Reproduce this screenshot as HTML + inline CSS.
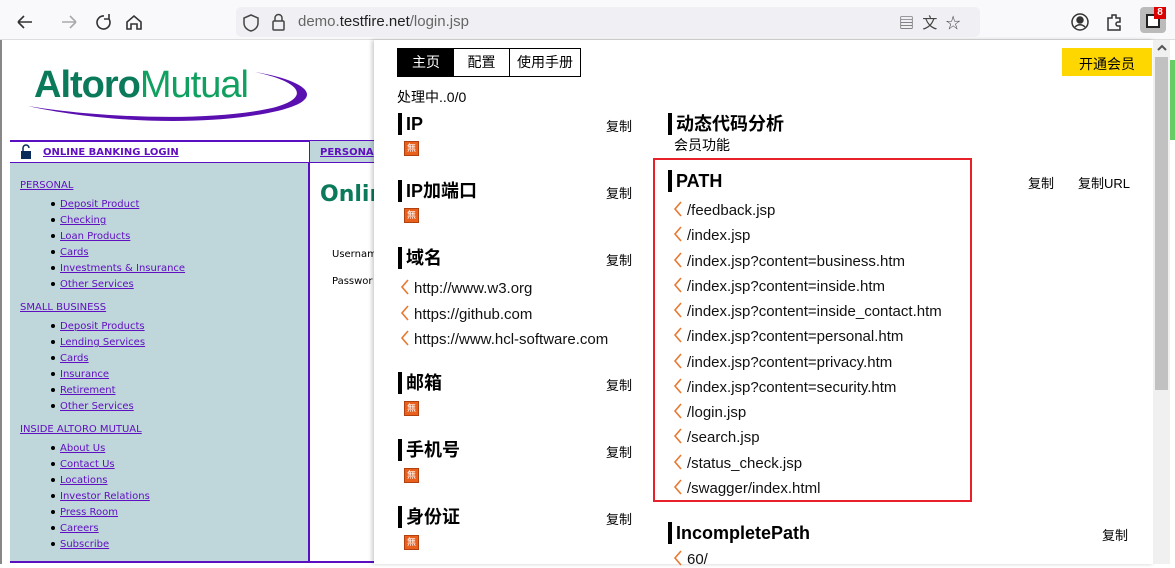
<!DOCTYPE html>
<html><head><meta charset="utf-8"><style>
*{margin:0;padding:0;box-sizing:border-box}
body{width:1175px;height:564px;overflow:hidden;background:#fff;font-family:"Liberation Sans","Noto Sans CJK SC",sans-serif;position:relative}
.a{position:absolute;white-space:nowrap}
.tb{left:0;top:0;width:1175px;height:40px;background:#f9f9fb;border-bottom:1px solid #ddd}
.url{left:236px;top:7px;width:744px;height:30px;background:#f0f0f4;border-radius:5px}
.side{left:10px;top:163px;width:300px;height:399px;background:#bfd6db;border-right:2px solid #5a10c0}
.lk{color:#6010c0;text-decoration:underline;font-family:"DejaVu Sans",sans-serif;font-size:10px}
.ul{color:#6010c0;font-family:"DejaVu Sans",sans-serif;font-size:10px;line-height:16px}
.ul u{text-decoration:underline}
.ul b{display:inline-block;width:4px;height:4px;background:#000;border-radius:50%;margin:0 5px 1px 0;vertical-align:middle}
.pop{left:374px;top:40px;width:780px;height:524px;background:#fff;box-shadow:-2px 0 4px rgba(0,0,0,.2)}
.h{font-size:18px;font-weight:bold;color:#000;border-left:4px solid #000;padding-left:4px;line-height:22px}
.cp{font-size:13px;color:#000}
.ic{width:15px;height:15px;background:#e8601c;border:1px solid #b04010;color:#fff;font-size:9px;line-height:13px;text-align:center}
.it{font-size:15px;color:#111}
.ch{display:inline-block;width:10px;height:16px;margin-right:4px;vertical-align:-2px}
</style></head><body>
<div class="a tb"></div>
<svg class="a" style="left:14px;top:12px" width="140" height="20" fill="none" stroke="#333" stroke-width="1.6">
<path d="M4 10h14M4 10l6-6M4 10l6 6"/>
<path d="M48 10h14M62 10l-6-6M62 10l-6 6" stroke="#aaa"/>
<path d="M90 4a6.5 6.5 0 1 0 5 3M95 2v5h-5"/>
<path d="M113 10l7-6 7 6v7h-4v-5h-6v5h-4z"/>
</svg>
<div class="a url"></div>
<svg class="a" style="left:243px;top:13px" width="50" height="20" fill="none" stroke="#444" stroke-width="1.5"><path d="M8 2l7 3v5c0 4-3 7-7 8-4-1-7-4-7-8V5z"/><rect x="30" y="8" width="11" height="9" rx="1"/><path d="M32 8V5a3.5 3.5 0 0 1 7 0v3"/></svg>
<div class="a" style="left:298px;top:13px;font-size:15px;color:#666">demo.<span style="color:#222">testfire.net</span>/login.jsp</div>
<div class="a" style="left:899px;top:12px;font-size:15px;color:#444">▤ &nbsp;文 &nbsp;☆</div>
<svg class="a" style="left:1070px;top:12px" width="60" height="20" fill="none" stroke="#333" stroke-width="1.5"><circle cx="10" cy="10" r="8"/><circle cx="10" cy="8" r="3" fill="#333"/><path d="M5 15c3-3 7-3 10 0" /><path d="M38 6h4V3h4v3h4v4h-2a2 2 0 0 0 0 4h2v4H38z"/></svg>
<div class="a" style="left:1140px;top:7px;width:26px;height:26px;background:#bbb;border-radius:4px"></div>
<div class="a" style="left:1146px;top:14px;width:14px;height:14px;background:#fff;border:2px solid #222"></div>
<div class="a" style="left:1154px;top:7px;width:12px;height:12px;background:#d00;color:#fff;font-size:10px;font-weight:bold;text-align:center;line-height:12px">8</div>
<div class="a" style="left:0;top:40px;width:2px;height:524px;background:#888"></div>
<svg class="a" style="left:20px;top:68px" width="290" height="60"><path d="M235 4c60 10 80 32-5 44C160 58 70 52 8 38 80 50 190 54 252 40 292 30 282 14 235 4z" fill="#5a10b0"/></svg>
<div class="a" style="left:34px;top:64px;font-size:38px;letter-spacing:-1px;font-weight:bold;color:#0a7a5a">Altoro<span style="font-weight:normal;color:#10a060">Mutual</span></div>
<div class="a" style="left:10px;top:140px;width:370px;height:2px;background:#5a10c0"></div>
<div class="a" style="left:10px;top:162px;width:370px;height:1px;background:#5a10c0"></div>
<div class="a" style="left:309px;top:140px;width:1px;height:24px;background:#5a10c0"></div>
<div class="a" style="left:310px;top:141px;width:70px;height:21px;background:#bfd6db"></div>
<svg class="a" style="left:20px;top:144px" width="12" height="15"><path d="M3 7V4a3 3 0 0 1 6 0" fill="none" stroke="#0a2a5a" stroke-width="1.5"/><rect x="1" y="7" width="10" height="8" fill="#0a2a5a"/></svg>
<div class="a lk" style="left:43px;top:147px;font-weight:bold">ONLINE BANKING LOGIN</div>
<div class="a lk" style="left:320px;top:147px;font-weight:bold">PERSONA</div>
<div class="a side"></div>
<div class="a" style="left:10px;top:561px;width:370px;height:2px;background:#5a10c0"></div>
<div class="a" style="left:320px;top:182px;font-size:22px;font-weight:bold;color:#0a7a5a;font-family:'DejaVu Sans',sans-serif">Onlin</div>
<div class="a" style="left:332px;top:249px;font-size:10px;font-family:'DejaVu Sans',sans-serif">Usernam</div>
<div class="a" style="left:332px;top:276px;font-size:10px;font-family:'DejaVu Sans',sans-serif">Passwor</div>
<div class="a" style="left:1170px;top:60px;width:5px;height:80px;background:#6c6"></div>
<div class="a lk" style="left:20px;top:180px">PERSONAL</div>
<div class="a lk" style="left:20px;top:302px">SMALL BUSINESS</div>
<div class="a lk" style="left:20px;top:424px">INSIDE ALTORO MUTUAL</div>
<div class="a ul" style="left:51px;top:197px"><b></b><u>Deposit Product</u><br><b></b><u>Checking</u><br><b></b><u>Loan Products</u><br><b></b><u>Cards</u><br><b></b><u>Investments &amp; Insurance</u><br><b></b><u>Other Services</u></div>
<div class="a ul" style="left:51px;top:319px"><b></b><u>Deposit Products</u><br><b></b><u>Lending Services</u><br><b></b><u>Cards</u><br><b></b><u>Insurance</u><br><b></b><u>Retirement</u><br><b></b><u>Other Services</u></div>
<div class="a ul" style="left:51px;top:441px"><b></b><u>About Us</u><br><b></b><u>Contact Us</u><br><b></b><u>Locations</u><br><b></b><u>Investor Relations</u><br><b></b><u>Press Room</u><br><b></b><u>Careers</u><br><b></b><u>Subscribe</u></div>
<div class="a pop"></div>
<div class="a" style="left:1153px;top:40px;width:17px;height:524px;background:#f0f0f0"></div>
<div class="a" style="left:1155px;top:57px;width:13px;height:333px;background:#c1c1c1"></div>
<svg class="a" style="left:1157px;top:44px" width="10" height="8"><path d="M1 6l4-4 4 4" fill="none" stroke="#555" stroke-width="2"/></svg>
<div class="a" style="left:397px;top:48px;width:184px;height:29px;border:1px solid #000;font-size:14px;line-height:27px;display:flex">
<div style="width:56px;background:#000;color:#fff;text-align:center">主页</div>
<div style="width:56px;text-align:center;border-right:1px solid #000">配置</div>
<div style="flex:1;text-align:center">使用手册</div></div>
<div class="a" style="left:1062px;top:48px;width:90px;height:28px;background:#ffd700;font-size:14px;line-height:32px;text-align:center">开通会员</div>
<div class="a" style="left:397px;top:87px;font-size:14px">处理中..0/0</div>
<div class="a h" style="left:398px;top:113px">IP</div><div class="a cp" style="left:606px;top:116px">复制</div><div class="a ic" style="left:404px;top:141px">無</div>
<div class="a h" style="left:398px;top:180px">IP加端口</div><div class="a cp" style="left:606px;top:183px">复制</div><div class="a ic" style="left:404px;top:208px">無</div>
<div class="a h" style="left:398px;top:247px">域名</div><div class="a cp" style="left:606px;top:250px">复制</div>
<svg width="0" height="0" style="position:absolute"><defs><symbol id="c" viewBox="0 0 10 16"><path d="M8 1L2 8l6 7" fill="none" stroke="#e87830" stroke-width="1.6"/></symbol></defs></svg>
<div class="a it" style="left:400px;top:276px;line-height:25.5px"><svg class="ch"><use href="#c"/></svg>http://www.w3.org<br><svg class="ch"><use href="#c"/></svg>https://github.com<br><svg class="ch"><use href="#c"/></svg>https://www.hcl-software.com</div>
<div class="a h" style="left:398px;top:372px">邮箱</div><div class="a cp" style="left:606px;top:375px">复制</div><div class="a ic" style="left:404px;top:401px">無</div>
<div class="a h" style="left:398px;top:439px">手机号</div><div class="a cp" style="left:606px;top:442px">复制</div><div class="a ic" style="left:404px;top:468px">無</div>
<div class="a h" style="left:398px;top:506px">身份证</div><div class="a cp" style="left:606px;top:509px">复制</div><div class="a ic" style="left:404px;top:535px">無</div>
<div class="a h" style="left:668px;top:113px">动态代码分析</div>
<div class="a" style="left:674px;top:135px;font-size:14px">会员功能</div>
<div class="a" style="left:653px;top:158px;width:319px;height:344px;border:2px solid #e8202a"></div>
<div class="a h" style="left:668px;top:170px">PATH</div>
<div class="a cp" style="left:1028px;top:173px">复制</div><div class="a cp" style="left:1078px;top:173px">复制URL</div>
<div class="a it" style="left:673px;top:198px;line-height:25.25px"><svg class="ch"><use href="#c"/></svg>/feedback.jsp<br><svg class="ch"><use href="#c"/></svg>/index.jsp<br><svg class="ch"><use href="#c"/></svg>/index.jsp?content=business.htm<br><svg class="ch"><use href="#c"/></svg>/index.jsp?content=inside.htm<br><svg class="ch"><use href="#c"/></svg>/index.jsp?content=inside_contact.htm<br><svg class="ch"><use href="#c"/></svg>/index.jsp?content=personal.htm<br><svg class="ch"><use href="#c"/></svg>/index.jsp?content=privacy.htm<br><svg class="ch"><use href="#c"/></svg>/index.jsp?content=security.htm<br><svg class="ch"><use href="#c"/></svg>/login.jsp<br><svg class="ch"><use href="#c"/></svg>/search.jsp<br><svg class="ch"><use href="#c"/></svg>/status_check.jsp<br><svg class="ch"><use href="#c"/></svg>/swagger/index.html</div>
<div class="a h" style="left:668px;top:522px">IncompletePath</div><div class="a cp" style="left:1102px;top:525px">复制</div>
<div class="a it" style="left:673px;top:550px"><svg class="ch"><use href="#c"/></svg>60/</div>
</body></html>
